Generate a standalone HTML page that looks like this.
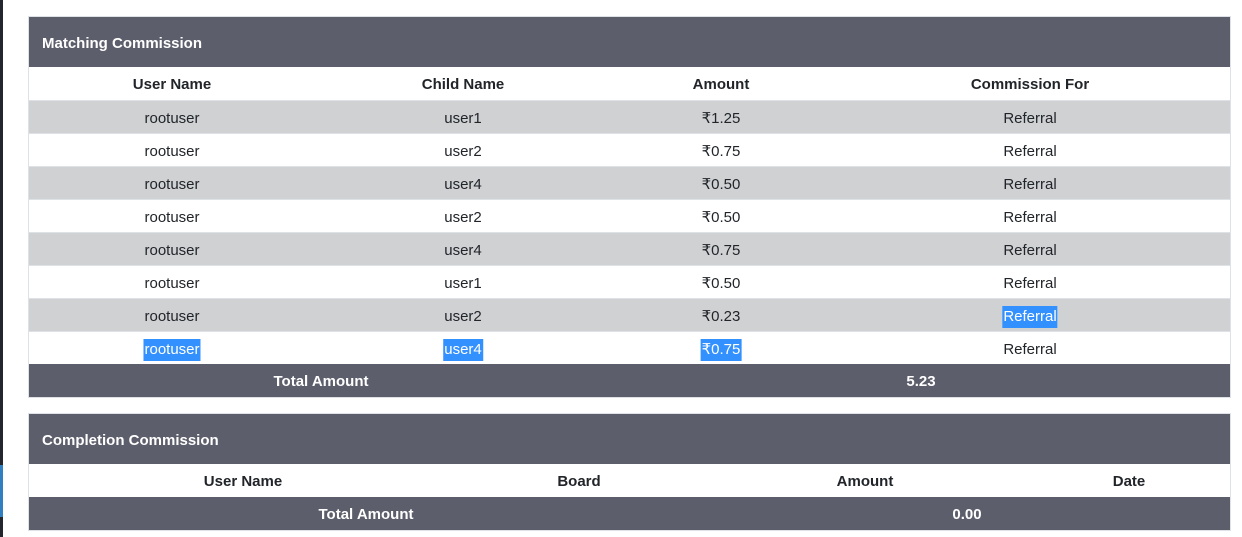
<!DOCTYPE html>
<html><head><meta charset="utf-8"><style>
*{margin:0;padding:0;box-sizing:border-box}
body{width:1242px;height:537px;background:#fff;position:relative;overflow:hidden;font-family:"Liberation Sans",sans-serif;font-size:15px;color:#212529}
.strip{position:absolute;left:0;top:0;width:3px;height:537px;background:#23272b}
.blue{position:absolute;left:0;top:465px;width:3px;height:52px;background:#2f7fc1}
.panel{position:absolute;left:28px;width:1203px;border:1px solid #dee2e6}
.hd{background:#5c5e6b;color:#fff;font-weight:bold;height:50px;line-height:53px;padding-left:13px;font-size:15px}
.row{position:relative;height:33px;border-top:1px solid #dee2e6}
.row.g{background:#d0d1d3}
.row.t{background:#5c5e6b;color:#fff;font-weight:bold;border-top:none}
.row.h{font-weight:bold;border-top:none}
.c{position:absolute;top:0;line-height:35px;transform:translateX(-50%);white-space:nowrap}
.sel{background:#3390ff;color:#fff;padding:0 1px;line-height:22px;display:inline-block}
</style></head><body>
<div class="strip"></div><div class="blue"></div>
<div class="panel" style="top:16px">
<div class="hd">Matching Commission</div>
<div class="row h"><span class="c" style="left:143px">User Name</span><span class="c" style="left:434px">Child Name</span><span class="c" style="left:692px">Amount</span><span class="c" style="left:1001px">Commission For</span></div>
<div class="row g"><span class="c" style="left:143px">rootuser</span><span class="c" style="left:434px">user1</span><span class="c" style="left:692px">₹1.25</span><span class="c" style="left:1001px">Referral</span></div>
<div class="row"><span class="c" style="left:143px">rootuser</span><span class="c" style="left:434px">user2</span><span class="c" style="left:692px">₹0.75</span><span class="c" style="left:1001px">Referral</span></div>
<div class="row g"><span class="c" style="left:143px">rootuser</span><span class="c" style="left:434px">user4</span><span class="c" style="left:692px">₹0.50</span><span class="c" style="left:1001px">Referral</span></div>
<div class="row"><span class="c" style="left:143px">rootuser</span><span class="c" style="left:434px">user2</span><span class="c" style="left:692px">₹0.50</span><span class="c" style="left:1001px">Referral</span></div>
<div class="row g"><span class="c" style="left:143px">rootuser</span><span class="c" style="left:434px">user4</span><span class="c" style="left:692px">₹0.75</span><span class="c" style="left:1001px">Referral</span></div>
<div class="row"><span class="c" style="left:143px">rootuser</span><span class="c" style="left:434px">user1</span><span class="c" style="left:692px">₹0.50</span><span class="c" style="left:1001px">Referral</span></div>
<div class="row g"><span class="c" style="left:143px">rootuser</span><span class="c" style="left:434px">user2</span><span class="c" style="left:692px">₹0.23</span><span class="c" style="left:1001px"><span class="sel">Referral</span></span></div>
<div class="row"><span class="c" style="left:143px"><span class="sel">rootuser</span></span><span class="c" style="left:434px"><span class="sel">user4</span></span><span class="c" style="left:692px"><span class="sel">₹0.75</span></span><span class="c" style="left:1001px">Referral</span></div>
<div class="row t"><span class="c" style="left:292px">Total Amount</span><span class="c" style="left:892px">5.23</span></div>
</div>
<div class="panel" style="top:413px">
<div class="hd">Completion Commission</div>
<div class="row h"><span class="c" style="left:214px">User Name</span><span class="c" style="left:550px">Board</span><span class="c" style="left:836px">Amount</span><span class="c" style="left:1100px">Date</span></div>
<div class="row t"><span class="c" style="left:337px">Total Amount</span><span class="c" style="left:938px">0.00</span></div>
</div>
</body></html>
